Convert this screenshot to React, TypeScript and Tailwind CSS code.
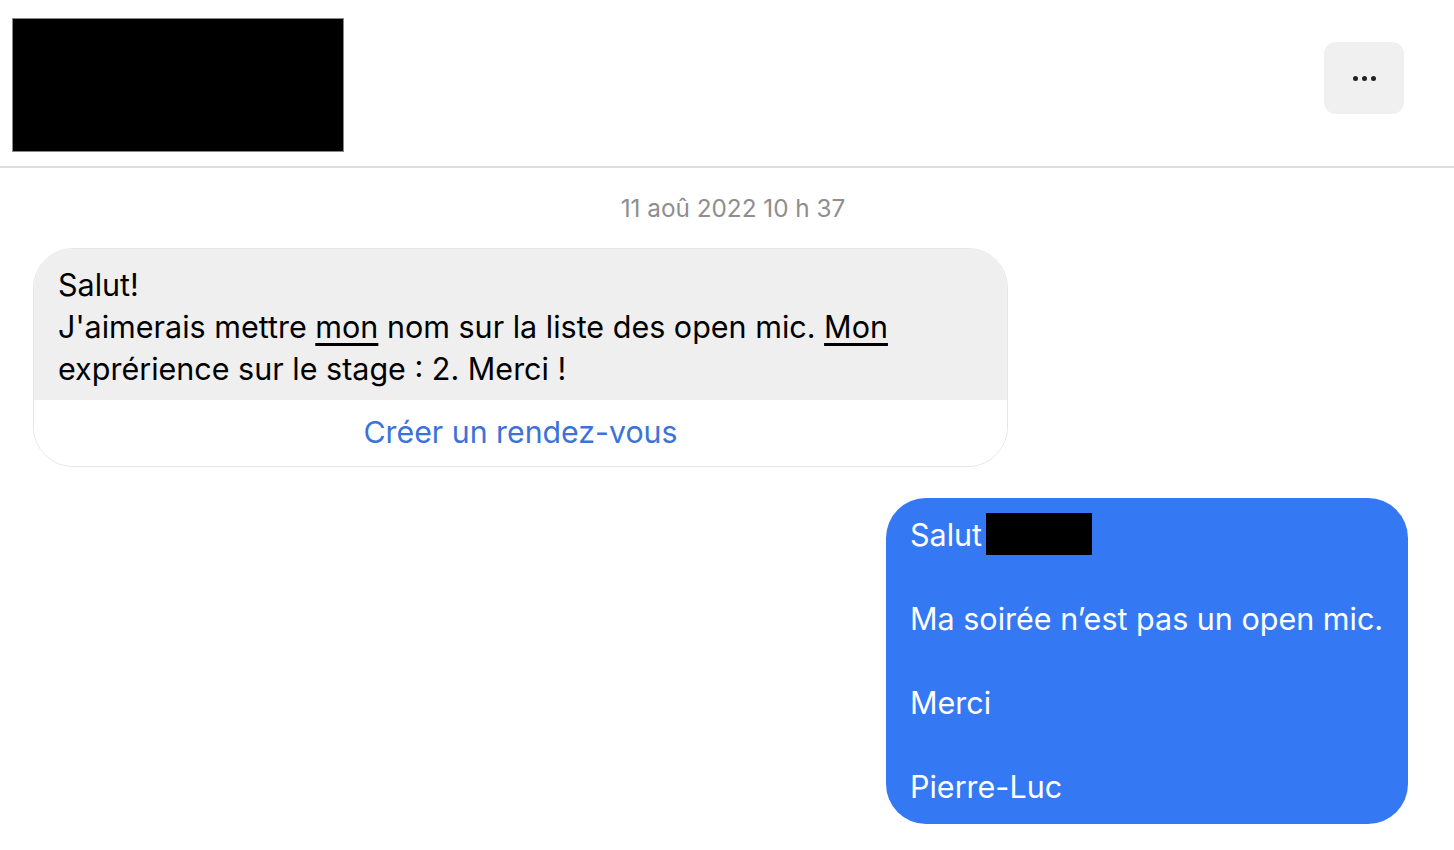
import React from 'react';

const font = { fontFamily: 'Inter, "Liberation Sans", sans-serif' };

export default function App() {
  return (
    <div className="min-h-[850px] w-full bg-white text-black" style={font}>
      {/* Header */}
      <header className="flex items-start justify-between border-b-2 border-[#dcdcdf] pt-[18px] pb-[14px] pl-[12px] pr-[50px]">
        <div className="h-[134px] w-[332px] border border-[#888] bg-black" />
        <button className="mt-[24px] flex h-[72px] w-[80px] items-center justify-center gap-[4px] rounded-[12px] bg-[#f0f0f0]">
          <span className="h-[5px] w-[5px] rounded-full bg-[#222]" />
          <span className="h-[5px] w-[5px] rounded-full bg-[#222]" />
          <span className="h-[5px] w-[5px] rounded-full bg-[#222]" />
        </button>
      </header>

      {/* Conversation */}
      <main className="flex flex-col px-[33px] pt-[25px]">
        <div className="pl-[12px] text-center text-[24.3px] leading-[30px] text-[#8e8e8e]">11 aoû 2022 10 h 37</div>

        <div className="mt-[25px] flex w-[975px] flex-col overflow-hidden rounded-[40px] border border-[#e6e6e6]">
          <div className="bg-[#efefef] px-[24px] pt-[15px] pb-[10px] text-[30.5px] leading-[42px]">
            <p>Salut!</p>
            <p>
              J'aimerais mettre <span className="underline underline-offset-[5px]">mon</span> nom sur la liste des open mic.{' '}
              <span className="underline underline-offset-[5px]">Mon</span> exprérience sur le stage : 2. Merci !
            </p>
          </div>
          <button className="h-[66px] bg-white text-center text-[30.3px] text-[#3b73d9]">Créer un rendez-vous</button>
        </div>

        <div className="mt-[31px] flex justify-end pr-[13px]">
          <div className="w-[522px] rounded-[40px] bg-[#3578f4] px-[24px] py-[16px] text-[30.5px] leading-[42px] text-white">
            <p className="flex items-center">
              Salut <span className="ml-[4px] -mt-[2px] inline-block h-[42px] w-[106px] bg-black" />
            </p>
            <p>&nbsp;</p>
            <p>Ma soirée n’est pas un open mic.</p>
            <p>&nbsp;</p>
            <p>Merci</p>
            <p>&nbsp;</p>
            <p>Pierre-Luc</p>
          </div>
        </div>
      </main>
    </div>
  );
}
